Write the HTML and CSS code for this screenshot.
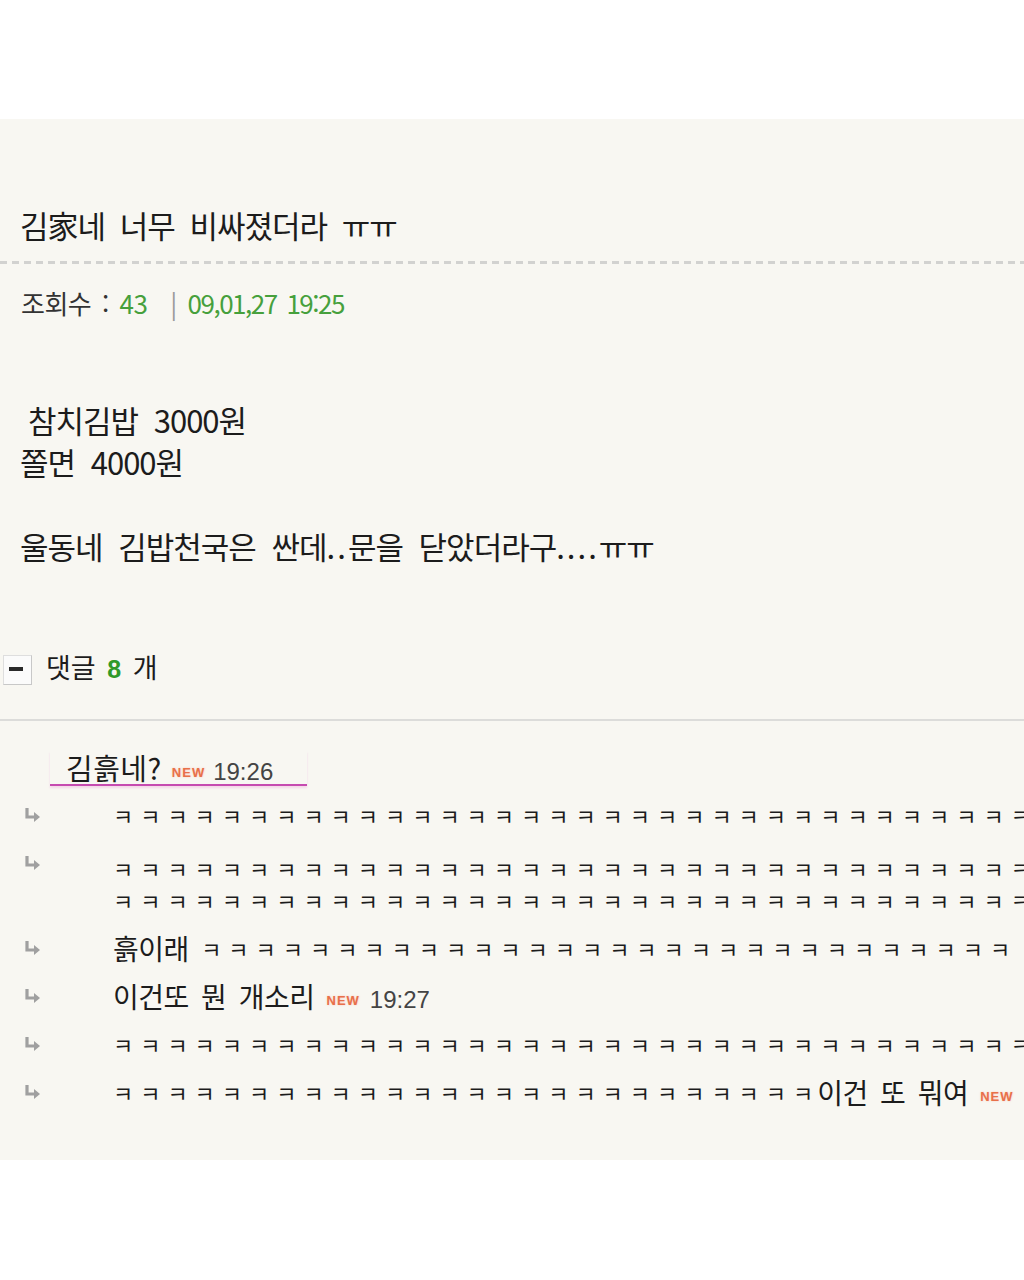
FILE: index.html
```html
<!DOCTYPE html>
<html lang="ko">
<head>
<meta charset="utf-8">
<title>김家네 너무 비싸졌더라</title>
<link rel="stylesheet" href="styles.css">
</head>
<body>
<div class="top"></div>
<div class="panel">
  <h1 class="title">김家네 너무 비싸졌더라 ㅠㅠ</h1>
  <div class="dots"></div>
  <div class="meta">조회수 : <span class="green">43</span> <span class="sep">|</span> <span class="green date">09,01,27 19:25</span></div>
  <div class="body">
    <p class="indent">참치김밥 3000원</p>
    <p>쫄면 4000원</p>
    <p>&nbsp;</p>
    <p>울동네 김밥천국은 싼데<span class="dot">..</span>문을 닫았더라구<span class="dot">....</span>ㅠㅠ</p>
  </div>
  <div class="comment-head">
    <span class="minus"><span class="bar"></span></span>
    <span class="ch-text">댓글 <b class="count">8</b> 개</span>
  </div>
  <div class="hr"></div>
  <div class="author"><span class="name">김흙네?</span><span class="new">NEW</span><span class="time">19:26</span></div>
  <div class="replies">
    <div class="reply">
      <svg class="arrow" viewBox="0 0 18 16"><path d="M4 1 V10 H12" fill="none" stroke="#a0a0a0" stroke-width="3.2"/><path d="M11 5 L17 10 L11 15 Z" fill="#a0a0a0"/></svg>
      <div class="rtext"><span class="kk">ㅋ ㅋ ㅋ ㅋ ㅋ ㅋ ㅋ ㅋ ㅋ ㅋ ㅋ ㅋ ㅋ ㅋ ㅋ ㅋ ㅋ ㅋ ㅋ ㅋ ㅋ ㅋ ㅋ ㅋ ㅋ ㅋ ㅋ ㅋ ㅋ ㅋ ㅋ ㅋ ㅋ ㅋ ㅋ ㅋ ㅋ ㅋ ㅋ ㅋ</span></div>
    </div>
    <div class="reply two">
      <svg class="arrow" viewBox="0 0 18 16"><path d="M4 1 V10 H12" fill="none" stroke="#a0a0a0" stroke-width="3.2"/><path d="M11 5 L17 10 L11 15 Z" fill="#a0a0a0"/></svg>
      <div class="rtext">
        <div class="line"><span class="kk">ㅋ ㅋ ㅋ ㅋ ㅋ ㅋ ㅋ ㅋ ㅋ ㅋ ㅋ ㅋ ㅋ ㅋ ㅋ ㅋ ㅋ ㅋ ㅋ ㅋ ㅋ ㅋ ㅋ ㅋ ㅋ ㅋ ㅋ ㅋ ㅋ ㅋ ㅋ ㅋ ㅋ ㅋ ㅋ ㅋ ㅋ ㅋ ㅋ ㅋ</span></div>
        <div class="line"><span class="kk">ㅋ ㅋ ㅋ ㅋ ㅋ ㅋ ㅋ ㅋ ㅋ ㅋ ㅋ ㅋ ㅋ ㅋ ㅋ ㅋ ㅋ ㅋ ㅋ ㅋ ㅋ ㅋ ㅋ ㅋ ㅋ ㅋ ㅋ ㅋ ㅋ ㅋ ㅋ ㅋ ㅋ ㅋ ㅋ ㅋ ㅋ ㅋ ㅋ ㅋ</span></div>
      </div>
    </div>
    <div class="reply">
      <svg class="arrow" viewBox="0 0 18 16"><path d="M4 1 V10 H12" fill="none" stroke="#a0a0a0" stroke-width="3.2"/><path d="M11 5 L17 10 L11 15 Z" fill="#a0a0a0"/></svg>
      <div class="rtext"><span class="rt">흙이래 </span><span class="kk">ㅋ ㅋ ㅋ ㅋ ㅋ ㅋ ㅋ ㅋ ㅋ ㅋ ㅋ ㅋ ㅋ ㅋ ㅋ ㅋ ㅋ ㅋ ㅋ ㅋ ㅋ ㅋ ㅋ ㅋ ㅋ ㅋ ㅋ ㅋ ㅋ ㅋ</span></div>
    </div>
    <div class="reply">
      <svg class="arrow" viewBox="0 0 18 16"><path d="M4 1 V10 H12" fill="none" stroke="#a0a0a0" stroke-width="3.2"/><path d="M11 5 L17 10 L11 15 Z" fill="#a0a0a0"/></svg>
      <div class="rtext"><span class="rt">이건또 뭔 개소리</span><span class="new">NEW</span><span class="time">19:27</span></div>
    </div>
    <div class="reply">
      <svg class="arrow" viewBox="0 0 18 16"><path d="M4 1 V10 H12" fill="none" stroke="#a0a0a0" stroke-width="3.2"/><path d="M11 5 L17 10 L11 15 Z" fill="#a0a0a0"/></svg>
      <div class="rtext"><span class="kk">ㅋ ㅋ ㅋ ㅋ ㅋ ㅋ ㅋ ㅋ ㅋ ㅋ ㅋ ㅋ ㅋ ㅋ ㅋ ㅋ ㅋ ㅋ ㅋ ㅋ ㅋ ㅋ ㅋ ㅋ ㅋ ㅋ ㅋ ㅋ ㅋ ㅋ ㅋ ㅋ ㅋ ㅋ ㅋ ㅋ ㅋ ㅋ ㅋ ㅋ</span></div>
    </div>
    <div class="reply">
      <svg class="arrow" viewBox="0 0 18 16"><path d="M4 1 V10 H12" fill="none" stroke="#a0a0a0" stroke-width="3.2"/><path d="M11 5 L17 10 L11 15 Z" fill="#a0a0a0"/></svg>
      <div class="rtext"><span class="kk">ㅋ ㅋ ㅋ ㅋ ㅋ ㅋ ㅋ ㅋ ㅋ ㅋ ㅋ ㅋ ㅋ ㅋ ㅋ ㅋ ㅋ ㅋ ㅋ ㅋ ㅋ ㅋ ㅋ ㅋ ㅋ ㅋ</span><span class="rt tail">이건 또 뭐여</span><span class="new">NEW</span></div>
    </div>
  </div>
</div>
</body>
</html>
```
FILE: styles.css
```css
html, body {
  margin: 0;
  padding: 0;
  background: #ffffff;
  overflow-x: hidden;
}
body {
  font-family: "Noto Sans CJK KR", "Noto Sans", sans-serif;
  color: #1c1c1c;
}
.top {
  height: 119px;
}
.panel {
  height: 1041px;
  background: #f8f7f2;
  overflow: hidden;
}
.title {
  margin: 86px 0 0 0;
  padding-left: 20px;
  font-size: 31px;
  letter-spacing: -1px;
  word-spacing: 7px;
  font-weight: normal;
  line-height: 40px;
  height: 40px;
  color: #1c1c1c;
}
.dots {
  margin-top: 16px;
  height: 3px;
  background: repeating-linear-gradient(to right, #d2d2d0 0, #d2d2d0 7px, transparent 7px, transparent 12px);
}
.meta {
  margin-top: 24px;
  padding-left: 21px;
  font-size: 26px;
  letter-spacing: -0.5px;
  word-spacing: 4px;
  line-height: 30px;
  height: 30px;
  color: #333333;
}
.green {
  color: #46a03c;
}
.date {
  letter-spacing: -1.5px;
}
.sep {
  color: #9a9a9a;
  margin: 0 0 0 12px;
}
.body {
  margin-top: 81px;
  padding-left: 20px;
  font-size: 31px;
  letter-spacing: -1px;
  word-spacing: 8px;
  line-height: 42px;
}
.body p {
  margin: 0;
  height: 42px;
}
.body .indent {
  padding-left: 8px;
}
.dot {
  letter-spacing: 2px;
}
.comment-head {
  margin-top: 83px;
  height: 36px;
  display: flex;
  align-items: center;
  padding-left: 3px;
}
.minus {
  width: 27px;
  height: 28px;
  border: 1px solid #dedede;
  border-right-color: #c8c8c8;
  border-bottom-color: #c8c8c8;
  background: #fbfbfb;
  display: flex;
  align-items: center;
  justify-content: center;
  margin-top: 4px;
}
.bar {
  width: 14px;
  height: 4px;
  background: #2a2a2a;
  margin-top: -2px;
  margin-left: -4px;
}
.ch-text {
  margin-left: 14px;
  font-size: 27px;
  word-spacing: 4px;
  line-height: 36px;
}
.count {
  color: #2f9a2a;
  font-family: "Liberation Sans", sans-serif;
  font-weight: bold;
  font-size: 25px;
}
.hr {
  margin-top: 33px;
  height: 2px;
  background: #dcdcda;
}
.author {
  margin: 30px 0 0 50px;
  width: 241px;
  padding-left: 16px;
  height: 32px;
  line-height: 32px;
  font-size: 29px;
  letter-spacing: 0.5px;
  border-bottom: 2px solid #c64bb0;
  box-shadow: 0 2px 2px rgba(230, 120, 200, 0.25);
  padding-bottom: 1px;
  white-space: nowrap;
}
.new {
  font-family: "Liberation Sans", sans-serif;
  font-weight: bold;
  font-size: 13px;
  letter-spacing: 1px;
  color: #e8704a;
  margin: 0 8px 0 10px;
  vertical-align: 3px;
  text-shadow: 0 0 2px rgba(250, 160, 140, 0.6);
}
.time {
  font-family: "Liberation Sans", "Noto Sans", sans-serif;
  font-size: 24px;
  letter-spacing: 0;
  color: #444444;
}
.replies {
  margin-top: 13px;
  display: flex;
  flex-direction: column;
  gap: 16px;
}
.reply {
  display: flex;
  align-items: flex-start;
}
.arrow {
  width: 18px;
  height: 16px;
  margin: 8px 0 0 23px;
  flex: none;
}
.rtext {
  margin-left: 72px;
  white-space: nowrap;
  overflow: hidden;
  line-height: 32px;
  height: 32px;
  font-size: 28px;
  flex: 1;
}
.reply.two .rtext {
  margin-top: 5px;
  height: 64px;
}
.rt {
  letter-spacing: -0.5px;
  word-spacing: 5px;
}
.tail {
  margin-left: 4px;
}
.rtext .new {
  margin: 0 10px 0 12px;
}
.kk {
  font-size: 22px;
  letter-spacing: 0;
  word-spacing: 0.8px;
  vertical-align: 2px;
  color: #1c1c1c;
}
.line {
  height: 32px;
}
```
